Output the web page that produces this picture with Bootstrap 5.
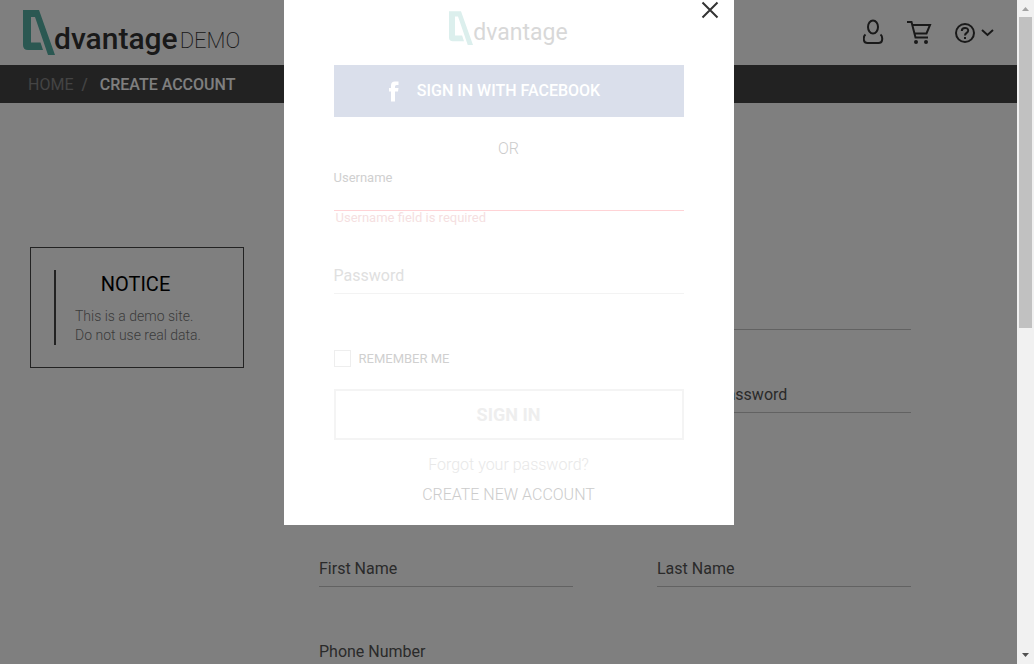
<!DOCTYPE html>
<html lang="en">
<head>
<meta charset="utf-8">
<meta name="viewport" content="width=device-width, initial-scale=1">
<title>Advantage DEMO - Create account</title>
<link href="https://cdn.jsdelivr.net/npm/bootstrap@5.3.0/dist/css/bootstrap.min.css" rel="stylesheet">
<style>
body { font-family: Roboto, "Liberation Sans", sans-serif; font-size: 16px; line-height: 20px; color: #000; }
a { text-decoration: none; }
.site-page { min-width: 0; }
.site-header { height: 65px; padding: 10px 22px 0 23px; }
.brand-word { font-size: 30px; line-height: 34px; font-weight: 500; color: #333; margin-top: 12px; margin-left: -1px; }
.brand-demo { font-size: 22px; line-height: 26px; font-weight: 200; color: #333; margin-top: 18px; margin-left: 2px; }
.header-icons { gap: 22px; padding-top: 9px; }
.tool-btn { border: 0; padding: 0; background: none; display: flex; align-items: center; color: #333; }
.crumb-bar { height: 38px; padding: 2px 0 0 28px; background: #444; }
.crumb-bar .breadcrumb-item, .crumb-bar a { color: #888; }
.crumb-bar .breadcrumb-item + .breadcrumb-item::before { color: #888; padding-right: 12px; }
.crumb-bar .breadcrumb-item.active { color: #fff; font-weight: 500; }
.page-main { padding: 0 106px 0 30px; gap: 75px; }
.notice-box { width: 214px; margin-top: 144px; padding: 22px 23px; border: 1px solid #444; }
.notice-text { border-left: 2px solid #444; padding: 0 0 0 19px; font-size: 14px; line-height: 19px; font-weight: 300; color: #777; }
.notice-text h2 { font-size: 20px; line-height: 28px; font-weight: 400; color: #000; margin-bottom: 9px; padding-right: 24px; }
.account-form { margin-top: 191px; }
.field-grid { display: grid; grid-template-columns: 1fr 1fr; column-gap: 84px; row-gap: 47px; margin-bottom: 138px; }
.line-field { display: grid; }
.line-field > * { grid-area: 1 / 1; }
.line-field label { align-self: center; color: #555; pointer-events: none; }
.line-field input { height: 36px; width: 100%; border: 0; border-bottom: 1px solid #c4c4c4; border-radius: 0; background: none; padding: 0; }
.dim { background: rgba(0, 0, 0, .5); }
.login-box { width: 450px; max-width: 100%; background: #fff; padding: 11px 50px 20px; z-index: 2; }
.login-close { top: 1px; right: 15px; z-index: 3; }
.login-word { font-size: 23px; line-height: 28px; color: #d8d8d8; margin-top: 8px; }
.fb-btn { height: 52px; border-radius: 0; background: #dadfeb; color: #fff; font-weight: 500; margin-top: 18px; padding: 0 28px 0 0; gap: 18px; }
.fb-btn, .sign-btn { line-height: 20px; }
.or-line { color: #ccc; font-weight: 300; margin: 22px 0 9px; }
.user-label, .user-error { font-size: 13px; }
.user-label { color: #d0d0d0; }
.user-input { height: 23px; border: 0; border-bottom: 1px solid #ffd3d6; border-radius: 0; padding: 0; }
.user-error { color: #f5dfe1; line-height: 14px; padding-left: 2px; margin-bottom: 33px; }
.pass-field label { color: #e0e0e0; }
.pass-field input { border-bottom-color: #f3f3f3; }
.remember-line { margin: 56px 0 22px; gap: 8px; font-size: 13px; line-height: 17px; color: #d0d0d0; }
.remember-line .form-check-input { width: 17px; height: 17px; margin: 0; border: 1px solid #eee; border-radius: 0; }
.sign-btn { height: 51px; border: 2px solid #f4f4f4; border-radius: 0; color: #eee; font-size: 18px; font-weight: 700; }
.forgot-link { color: #e8e8e8; margin-top: 15px; font-weight: 300; }
.create-link { color: #ccc; margin-top: 10px; font-weight: 300; }
.scroll-track { width: 17px; background: #f1f1f1; }
.scroll-thumb { width: 13px; height: 311px; background: #c1c1c1; }
.scroll-arrow { height: 17px; }
</style>
</head>
<body class="d-flex vh-100 overflow-hidden">
<svg width="0" height="0" class="position-absolute" aria-hidden="true">
  <symbol id="a-mark" viewBox="0 0 32 45"><path d="M0 0H16L32 45H25L12 7H8V32.500H17.500L20 40H5Q0 40 0 35Z" fill="currentColor"/></symbol>
</svg>
<div class="site-page flex-grow-1 position-relative overflow-hidden">
  <header class="site-header d-flex align-items-start">
    <a href="#" class="d-flex" aria-label="Advantage DEMO">
      <svg width="32" height="45" style="color:#56b0a4"><use href="#a-mark"/></svg>
      <span class="brand-word">dvantage</span><span class="brand-demo">DEMO</span>
    </a>
    <div class="header-icons d-flex ms-auto">
      <button class="tool-btn" aria-label="User"><svg width="22" height="26" viewBox="0 0 22 26" fill="none" stroke="currentColor" stroke-width="2"><ellipse cx="10" cy="8" rx="5" ry="6.500"/><path d="M2.500 15.500C0.500 17 .5 19 1 21.500Q1.500 24 4.500 24H15.500Q18.500 24 19 21.500C19.500 19 19.500 17 17.500 15.500"/></svg></button>
      <button class="tool-btn" aria-label="Cart"><svg width="25" height="26" viewBox="0 0 25 26" fill="none" stroke="currentColor" stroke-width="2"><path d="M0 3H4.500L8.500 18.500H21M5.500 6H23L19.500 14.500H7.500"/><circle cx="9" cy="23" r="2" fill="currentColor" stroke="none"/><circle cx="19" cy="23" r="2" fill="currentColor" stroke="none"/></svg></button>
      <button class="tool-btn" aria-label="Help"><svg width="41" height="26" viewBox="0 0 41 26" fill="none" stroke="currentColor" stroke-width="2"><circle cx="11" cy="14" r="9"/><path d="M7.800 12C7.800 8 14.200 8 14.200 11.500C14.200 14 11 13.800 11 16.500M11 18V20M28 11L33.500 16L39 11"/></svg></button>
    </div>
  </header>
  <nav class="crumb-bar d-flex align-items-center" aria-label="breadcrumb">
    <ol class="breadcrumb m-0">
      <li class="breadcrumb-item"><a href="#">HOME</a></li>
      <li class="breadcrumb-item active" aria-current="page">CREATE ACCOUNT</li>
    </ol>
  </nav>
  <main class="page-main d-flex align-items-start">
    <aside class="notice-box flex-shrink-0">
      <div class="notice-text"><h2 class="text-center">NOTICE</h2>This is a demo site.<br>Do not use real data.</div>
    </aside>
    <form class="account-form flex-grow-1">
      <div class="field-grid">
        <div class="line-field"><input type="text" aria-label="Username"></div>
        <div class="line-field"><input type="email" aria-label="Email"></div>
        <div class="line-field"><input type="password" aria-label="Password"></div>
        <div class="line-field"><label for="f-conf">Confirm password</label><input id="f-conf" type="password"></div>
      </div>
      <div class="field-grid">
        <div class="line-field"><label for="f-first">First Name</label><input id="f-first" type="text"></div>
        <div class="line-field"><label for="f-last">Last Name</label><input id="f-last" type="text"></div>
        <div class="line-field"><label for="f-phone">Phone Number</label><input id="f-phone" type="tel"></div>
      </div>
    </form>
  </main>
  <div class="dim position-absolute top-0 start-0 w-100 h-100 d-flex justify-content-center align-items-start">
    <section class="login-box position-relative" role="dialog" aria-label="Sign in">
      <button class="tool-btn login-close position-absolute" aria-label="Close"><svg width="18" height="18" viewBox="0 0 18 18" stroke="#333" stroke-width="2"><path d="M1.500 1.500L16.500 16.500M16.500 1.500L1.500 16.500"/></svg></button>
      <div class="d-flex justify-content-center">
        <svg width="24" height="34" style="color:#dcefed"><use href="#a-mark"/></svg><span class="login-word">dvantage</span>
      </div>
      <button class="btn fb-btn w-100 d-flex align-items-center justify-content-center"><svg width="10" height="21" viewBox="0 0 10 21" fill="#fff"><path d="M2 20.500V10.500H0V7H2V4.500Q2 0.500 6 .5H9.500V4H7.500Q6 4 6 5.500V7H9.500L9 10.500H6V20.500Z"/></svg>SIGN IN WITH FACEBOOK</button>
      <div class="or-line text-center">OR</div>
      <label class="user-label d-block" for="l-user">Username</label>
      <input class="user-input w-100 d-block" id="l-user" type="text">
      <div class="user-error">Username field is required</div>
      <div class="line-field pass-field"><label for="l-pass">Password</label><input id="l-pass" type="password"></div>
      <div class="remember-line d-flex align-items-center"><input class="form-check-input" type="checkbox" id="l-rem"><label for="l-rem">REMEMBER ME</label></div>
      <button class="btn sign-btn w-100 d-block p-0">SIGN IN</button>
      <a class="forgot-link d-block text-center" href="#">Forgot your password?</a>
      <a class="create-link d-block text-center" href="#">CREATE NEW ACCOUNT</a>
    </section>
  </div>
</div>
<div class="scroll-track d-flex flex-column align-items-center flex-shrink-0" aria-hidden="true">
  <svg class="scroll-arrow" width="17" viewBox="0 0 17 17"><path d="M5 11L8.500 7L12 11Z" fill="#a3a3a3"/></svg>
  <div class="scroll-thumb"></div>
  <svg class="scroll-arrow mt-auto" width="17" viewBox="0 0 17 17"><path d="M5 6H12L8.500 10Z" fill="#505050"/></svg>
</div>
<script src="https://cdn.jsdelivr.net/npm/bootstrap@5.3.0/dist/js/bootstrap.bundle.min.js"></script>
</body>
</html>
